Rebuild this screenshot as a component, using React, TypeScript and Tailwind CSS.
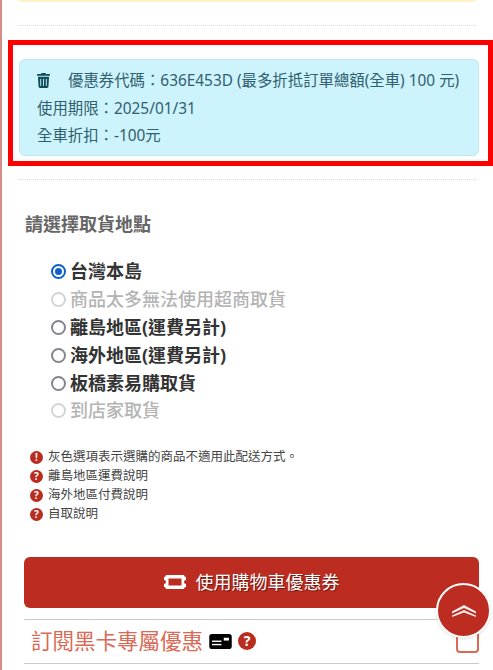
const font = { fontFamily: '"Noto Sans", "Noto Sans CJK TC", sans-serif' }

function TrashIcon() {
  return (
    <svg viewBox="0 0 448 512" className="w-[13px] h-[15px] fill-[#0f4c5c]">
      <path d="M432 32H312l-9.400-18.700A24 24 0 0 0 281.100 0H166.800a23.700 23.700 0 0 0-21.400 13.300L136 32H16A16 16 0 0 0 0 48v32a16 16 0 0 0 16 16h416a16 16 0 0 0 16-16V48a16 16 0 0 0-16-16zM53.200 467a48 48 0 0 0 47.900 45h245.800a48 48 0 0 0 47.900-45L416 128H32zM144 208v224a16 16 0 0 1-32 0V208a16 16 0 0 1 32 0zm96 0v224a16 16 0 0 1-32 0V208a16 16 0 0 1 32 0zm96 0v224a16 16 0 0 1-32 0V208a16 16 0 0 1 32 0z" />
    </svg>
  )
}

function Radio({ label, checked, disabled }: { label: string; checked?: boolean; disabled?: boolean }) {
  return (
    <label className={`flex items-center gap-[4px] h-[27.800px] text-[18px] ${disabled ? 'font-medium text-[#b4b4b4]' : 'font-bold text-[#333]'}`}>
      <span
        className={`w-[15px] h-[15px] rounded-full border-2 flex items-center justify-center bg-white ${
          checked ? 'border-[#0d5fd0]' : disabled ? 'border-[#d4d4d4]' : 'border-[#85858f]'
        }`}
      >
        {checked && <span className="w-[7px] h-[7px] rounded-full bg-[#0d5fd0]" />}
      </span>
      {label}
    </label>
  )
}

function Mark({ children }: { children: string }) {
  return (
    <span className="w-[13px] h-[13px] rounded-full bg-[#b92c20] text-white text-[10px] font-bold flex items-center justify-center leading-none">
      {children}
    </span>
  )
}

function Note({ mark, children }: { mark: string; children: string }) {
  return (
    <div className="flex items-center gap-[5px] h-[19px] text-[12.500px] text-[#444]">
      <Mark>{mark}</Mark>
      {children}
    </div>
  )
}

export default function App() {
  return (
    <div className="h-[670px] w-[493px] overflow-hidden relative bg-white border-l-2 border-[#d48f8b]" style={font}>
      <div className="mx-[17px] h-[2px] bg-[#fdf1c8] rounded-b" />
      <div className="mx-[17px] mt-[23px] border-t border-dotted border-[#dddddd]" />

      <div className="ml-[6px] mt-[14px] h-[126px] border-[5px] border-[#ff0000] pt-[14px] pl-[6px] pr-[9px]">
        <div className="h-[97px] rounded-md bg-[#cdf3fc] border border-[#bfe8f3] pl-[17px] pt-[7px] text-[15.400px] text-[#31606f] leading-[27.500px]">
          <div className="flex items-center whitespace-nowrap">
            <TrashIcon />
            <span className="ml-[18px]">優惠券代碼：636E453D (最多折抵訂單總額(全車) 100 元)</span>
          </div>
          <div>使用期限：2025/01/31</div>
          <div>全車折扣：-100元</div>
        </div>
      </div>

      <div className="mx-[17px] mt-[13px] border-t border-dotted border-[#dddddd]" />

      <h3 className="ml-[23px] mt-[31px] text-[18px] font-bold text-[#666] leading-[26px]">請選擇取貨地點</h3>

      <div className="ml-[49px] mt-[21px]">
        <Radio label="台灣本島" checked />
        <Radio label="商品太多無法使用超商取貨" disabled />
        <Radio label="離島地區(運費另計)" />
        <Radio label="海外地區(運費另計)" />
        <Radio label="板橋素易購取貨" />
        <Radio label="到店家取貨" disabled />
      </div>

      <div className="ml-[28px] mt-[23px]">
        <Note mark="!">灰色選項表示選購的商品不適用此配送方式。</Note>
        <Note mark="?">離島地區運費說明</Note>
        <Note mark="?">海外地區付費說明</Note>
        <Note mark="?">自取說明</Note>
      </div>

      <button className="ml-[22px] mt-[33px] w-[455px] h-[51px] rounded-md bg-[#bd2c20] text-white text-[18px] flex items-center justify-center gap-[10px] [text-shadow:1px_1px_1px_rgba(0,0,0,0.45)]">
        <svg viewBox="0 0 22 14" className="w-[22px] h-[14px]">
          <path
            fill="#fff"
            fillRule="evenodd"
            d="M2 0h18a2 2 0 0 0 2 2v3a2 2 0 0 0 0 4v3a2 2 0 0 0-2 2H2a2 2 0 0 0-2-2V9a2 2 0 0 0 0-4V2a2 2 0 0 0 2-2zm2.500 3.500v7h13v-7z"
          />
        </svg>
        使用購物車優惠券
      </button>

      <div className="ml-[22px] mt-[11px] w-[455px] h-[45px] border-y border-[#cccccc] flex items-center">
        <span className="ml-[7px] text-[21.500px] text-[#d96a55]">訂閱黑卡專屬優惠</span>
        <svg viewBox="0 0 24 16" className="ml-[6px] w-[23px] h-[15px]">
          <rect width="24" height="16" rx="3" fill="#000" />
          <rect x="3" y="7" width="10" height="1.500" fill="#fff" />
          <rect x="3" y="10.500" width="10" height="1.500" fill="#fff" />
          <rect x="15.500" y="4" width="5.500" height="3" fill="#fff" />
        </svg>
        <span className="ml-[6px] w-[18px] h-[18px] rounded-full bg-[#b92c20] text-white text-[14px] font-bold flex items-center justify-center leading-none">?</span>
        <span className="ml-auto w-[23px] h-[23px] border-2 border-[#d96a55] rounded-sm" />
      </div>

      <button className="absolute left-[434px] top-[583px] w-[55px] h-[55px] rounded-full bg-[#bd2c20] border-2 border-white shadow flex items-center justify-center">
        <svg viewBox="0 0 24 12" className="w-[24px] h-[12px] fill-[#ededed]">
          <path d="M12 0 24 6.500v2L12 3 0 8.500v-2z" />
          <path d="M12 5 24 10.500v1.500L12 7.500 0 12v-1.500z" />
        </svg>
      </button>
    </div>
  )
}
